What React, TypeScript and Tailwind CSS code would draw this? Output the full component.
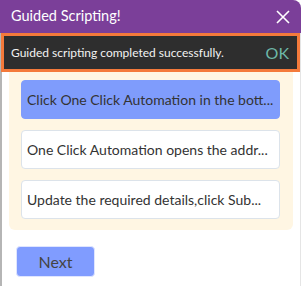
import React from "react"

const steps = [
  { text: "Click One Click Automation in the bott...", active: true },
  { text: "One Click Automation opens the addr...", active: false },
  { text: "Update the required details,click Sub...", active: false },
]

export default function App() {
  return (
    <div
      className="w-[303px] h-[286px] bg-white overflow-hidden"
      style={{ fontFamily: "Lato, 'Noto Sans', sans-serif" }}
    >
      <div className="w-[301px] h-full flex flex-col">
        {/* header */}
        <div className="h-[33px] shrink-0 bg-[#7b3f99] rounded-tr-[8px] flex items-center justify-between pl-[11px] pr-[11px]">
          <span className="text-white text-[14.5px] leading-none">Guided Scripting!</span>
          <svg width="14" height="14" viewBox="0 0 14 14">
            <path d="M1 1 L13 13 M13 1 L1 13" stroke="white" strokeWidth="1.6" />
          </svg>
        </div>

        <div className="flex flex-1 min-w-0 border-r border-[#e5e5e5]">
          <div className="w-[2px] bg-[#b5b5b5] shrink-0" />
          <div className="flex-1 min-w-0 flex flex-col">
            {/* toast */}
            <div className="-ml-[1px] h-[39px] border-[3px] border-[#f47a3b] bg-[#2e2e2e] flex items-center justify-between pl-[7px] pr-[8px]">
              <span className="text-[#f2f2f2] text-[12px] whitespace-nowrap">Guided scripting completed successfully.</span>
              <span className="text-[#6db7a8] text-[16px]">OK</span>
            </div>

            {/* steps */}
            <div className="ml-[7px] mr-[7px] bg-[#fff6e3] rounded-b-[6px] pt-[8px] pb-[11px] pl-[12px] pr-[13px] flex flex-col gap-[11px]">
              {steps.map((s) => (
                <div
                  key={s.text}
                  className={
                    s.active
                      ? "h-[39px] rounded-[4px] bg-[#7f9cfc] border border-[#7f9cfc] flex items-center px-[5px]"
                      : "h-[39px] rounded-[4px] bg-white border border-[#dce3ea] flex items-center px-[5px]"
                  }
                >
                  <span className="truncate text-[14px] text-[#333]">{s.text}</span>
                </div>
              ))}
            </div>

            {/* footer */}
            <div className="pt-[16px] pl-[14px]">
              <button className="w-[79px] h-[31px] rounded-[4px] bg-[#809cff] border border-[#dfe5ff] text-[16px] text-[#444]">
                Next
              </button>
            </div>
          </div>
        </div>
      </div>
    </div>
  )
}
